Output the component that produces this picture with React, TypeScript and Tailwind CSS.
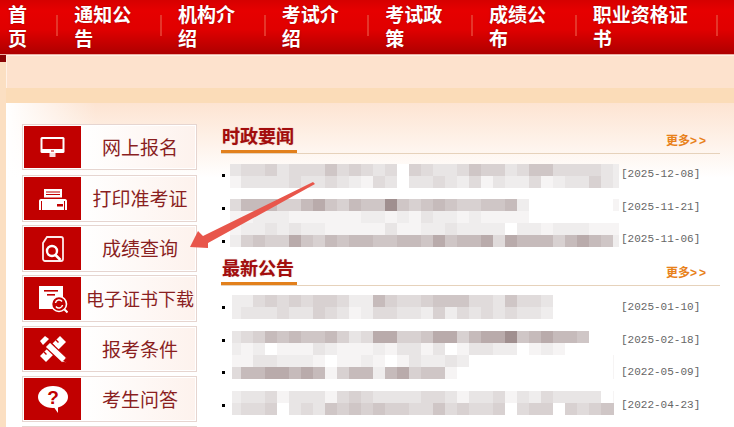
import type { ReactNode } from "react";

const cjk = "font-['Microsoft_YaHei','Noto_Sans_CJK_SC',sans-serif]";

const navItems = ["首页", "通知公告", "机构介绍", "考试介绍", "考试政策", "成绩公布", "职业资格证书"];

// mosaic shades, 0 = clean white up to 9 = darkest block
const shades = ["#ffffff", "#f6f4f4", "#efeded", "#e8e5e5", "#e0dbdb", "#d8d1d1", "#cfc6c6", "#c6bbbb", "#b9abab", "#a08f8f"];

const newsBlur = [
  { rows: ["344534446454340543346553466444432", "133334334321430334324132241233532"], gap: "mb-[11px]" },
  {
    rows: [
      "477755786576696567655667200000001",
      "112221111112212132212111100000000",
      "122323221111131122322220221222111",
      "256558657677667768677848777578762",
    ],
    gap: "",
  },
];

const noticeBlur = [
  { rows: ["224545455422754456664436443000000" + "1", "233343354312443325243434332000000" + "1"], gap: "mb-[12px]" },
  {
    rows: [
      "345767667534885568857889678776000" + "01",
      "212011132111213313013 322012100000".replace(" ", ""),
      "113322210112101322320000000000001",
      "477887871577278566100000000000001",
    ],
    gap: "mb-[12px]",
  },
  {
    rows: ["233413331454333344313341324333301", "344503436565655446454450455054566" + "21"],
    gap: "",
  },
];

function Mosaic({ rows, first, last, className }: { rows: string[]; first: number; last: number; className?: string }) {
  return (
    <div className={className}>
      {rows.map((row, i) => (
        <div key={i} className="flex h-[12px]">
          {row
            .slice(0, 33)
            .split("")
            .map((c, j) => (
              <div
                key={j}
                style={{
                  width: j === 0 ? first : j === 32 ? last : 12,
                  backgroundColor: shades[Number(c)],
                }}
              />
            ))}
        </div>
      ))}
    </div>
  );
}

function SectionHead({ title }: { title: string }) {
  return (
    <div className="flex h-[33px] justify-between border-b border-[#e6d2bb]">
      <h2
        className={`${cjk} h-[32px] w-[76px] border-b-[3px] border-[#e2801c] pl-px pt-[1px] text-[18px] font-bold leading-[26px] text-[#a30d0d] [text-shadow:0_0_1px_rgba(150,40,40,0.5)]`}
      >
        {title}
      </h2>
      <a className="pr-3 pt-[11px] text-[12px] font-bold leading-[16px] text-[#e8811a]">
        <span className={cjk}>更多</span>
        <span className="font-['Liberation_Sans',sans-serif] tracking-[2px]">&gt;&gt;</span>
      </a>
    </div>
  );
}

function Bullets({ count, className }: { count: number; className: string }) {
  return (
    <div className={className}>
      {Array.from({ length: count }).map((_, i) => (
        <div key={i} className="ml-px h-[3px] w-[3px] bg-black" />
      ))}
    </div>
  );
}

function Dates({ items, className }: { items: string[]; className: string }) {
  return (
    <div className={className}>
      {items.map((d) => (
        <div key={d} className="h-[20px] font-['Liberation_Mono',monospace] text-[11px] leading-[20px] text-[#666666]">
          [{d}]
        </div>
      ))}
    </div>
  );
}

const MonitorIcon = (
  <svg viewBox="0 0 30 30" className="h-[30px] w-[30px]" fill="none">
    <rect x="2.5" y="5" width="24" height="16" rx="1.5" fill="#fff" />
    <rect x="4.5" y="7" width="20" height="10" fill="#c10000" />
    <rect x="13" y="18.5" width="3" height="1" fill="#c10000" />
    <rect x="11.5" y="21" width="6" height="4" fill="#f5dcdc" />
  </svg>
);

const PrinterIcon = (
  <svg viewBox="0 0 30 30" className="h-[30px] w-[30px]" fill="none">
    <rect x="6" y="5" width="18" height="10" fill="#fff" />
    <rect x="8" y="7.5" width="14" height="1" fill="#c10000" />
    <rect x="8" y="10" width="14" height="1" fill="#c10000" />
    <path d="M1 26V17c0-1 .6-2 2-2h24c1.4 0 2 1 2 2v9H1Z" fill="#fff" />
    <rect x="3" y="13.5" width="24" height="1.5" fill="#c10000" />
    <rect x="3" y="17" width="1" height="9" fill="#c10000" />
    <rect x="26" y="17" width="1" height="9" fill="#c10000" />
    <rect x="19" y="20" width="6" height="2.5" fill="#c10000" />
  </svg>
);

const SearchDocIcon = (
  <svg viewBox="0 0 30 30" className="h-[30px] w-[30px]" fill="none" stroke="#fdeaea">
    <path d="M9 3h14c1 0 2 1 2 2v20c0 1-1 2-2 2H7c-1 0-2-1-2-2V9l4-6Z" strokeWidth="1.8" />
    <circle cx="14" cy="17" r="5" fill="#c10000" stroke="#fff" strokeWidth="2.4" />
    <path d="m17.5 21 5 5" stroke="#fff" strokeWidth="2.6" />
  </svg>
);

const CertIcon = (
  <svg viewBox="0 0 30 30" className="h-[30px] w-[30px]" fill="none">
    <rect x="1" y="2" width="24" height="23" fill="#fff" />
    <rect x="6" y="6" width="14" height="1.6" fill="#c10000" />
    <rect x="9" y="10" width="8" height="1.6" fill="#c10000" />
    <circle cx="21" cy="20" r="7.5" fill="#c10000" stroke="#fff" strokeWidth="1.6" />
    <path d="M17.5 19a3.6 3.6 0 0 1 6.5-1.5M24.5 21a3.6 3.6 0 0 1-6.5 1.5" stroke="#fff" strokeWidth="1.5" />
    <path d="m26.5 25.5 3 3" stroke="#fff" strokeWidth="2" />
  </svg>
);

const ToolsIcon = (
  <svg viewBox="0 0 30 30" className="h-[30px] w-[30px]" fill="none">
    <path d="M2 22 22 2l6 6L8 28Z" fill="#fff" />
    <path d="m6 18 2.5 2.5M10 14l2.5 2.5M14 10l2.500 2.500M18 6l2.500 2.500" stroke="#c10000" strokeWidth="1.400" />
    <path d="M2 7 7 2l4 3-6 6Z" fill="#fff" />
    <path d="M12 8 28 23l1 6-6-1L7 13Z" fill="#fff" stroke="#c10000" strokeWidth="1.200" />
    <path d="m25 27 3-3 1 5Z" fill="#c10000" />
  </svg>
);

const QuestionIcon = (
  <svg viewBox="0 0 30 30" className="h-[30px] w-[30px]">
    <ellipse cx="15" cy="13" rx="15" ry="11" fill="#fff" />
    <path d="M15 22 20 29 20 20Z" fill="#fff" />
    <text x="15" y="20" textAnchor="middle" fontSize="19" fontWeight="bold" fill="#c10000" fontFamily="Liberation Sans, sans-serif">
      ?
    </text>
  </svg>
);

const menu: { label: string; icon?: ReactNode; box: string; text: string }[] = [
  { label: "网上报名", icon: MonitorIcon, box: "h-[46px] mb-[5px]", text: "text-[19px]" },
  { label: "打印准考证", icon: PrinterIcon, box: "h-[47px] mb-[3px]", text: "text-[19px]" },
  { label: "成绩查询", icon: SearchDocIcon, box: "h-[47px] mb-[3px]", text: "text-[19px]" },
  { label: "电子证书下载", icon: CertIcon, box: "h-[47px] mb-[4px]", text: "text-[18px]" },
  { label: "报考条件", icon: ToolsIcon, box: "h-[46px] mb-[4px]", text: "text-[19px]" },
  { label: "考生问答", icon: QuestionIcon, box: "h-[46px] mb-[4px]", text: "text-[19px]" },
  { label: "", box: "h-[46px]", text: "text-[19px]" },
];

export default function App() {
  return (
    <div className="relative h-[427px] w-[734px] overflow-hidden bg-white">
      {/* top nav */}
      <div className="flex h-[55px] items-center bg-[linear-gradient(#d60000,#e60000_20%,#e00000_55%,#ae0000)] pb-[3px] pl-2 border-b border-[#ecaca0]">
        {navItems.map((item) => (
          <div key={item} className="flex items-center">
            <span
              className={`${cjk} text-[19px] font-bold leading-[24px] text-white [text-shadow:0_0_2px_rgba(130,0,0,0.7)]`}
            >
              {item}
            </span>
            <div className="ml-[11px] mr-[16px] h-[21px] w-[2px] bg-[#e5352a]" />
          </div>
        ))}
      </div>

      <div className="flex">
        {/* left strip */}
        <div className="h-[372px] w-[6px] bg-[#fbdfc2]">
          <div className="h-[7px] bg-[#8a0505]" />
        </div>

        <div className="flex-1">
          <div className="h-[33px] border-l border-t border-[#fff1e6] bg-[#fde2cd]" />
          <div className="h-[15px] bg-[#fbdcb8]" />

          <div className="flex bg-[linear-gradient(to_right,#ffffff,rgba(255,255,255,0)_90px),linear-gradient(#fde4d2,#ffffff_75px)] pl-4 pt-[21px]">
            {/* side menu */}
            <div className="w-[175px] shrink-0">
              {menu.map((m, i) => (
                <div key={i} className={`${m.box} flex border border-[#e6d5d0] bg-white p-px`}>
                  <div className="flex w-[57px] shrink-0 items-center justify-center bg-[#c10000]">{m.icon}</div>
                  <div
                    className={`${cjk} ${m.text} flex flex-1 items-center justify-center bg-[linear-gradient(to_right,#ffffff,#fdf2ed)] pl-[4px] text-[#8a1f1f] whitespace-nowrap`}
                  >
                    {m.label}
                  </div>
                </div>
              ))}
            </div>

            <div className="ml-6 w-[499px] -mt-[3px]">
              <SectionHead title="时政要闻" />
              <div className="flex h-[93px] pt-[10px]">
                <Bullets count={3} className="flex w-[9px] flex-col gap-[30px] pt-[10px]" />
                <div className="w-[391px]">
                  {newsBlur.map((b, i) => (
                    <Mosaic key={i} rows={b.rows} first={11} last={6} className={b.gap} />
                  ))}
                </div>
                <Dates items={["2025-12-08", "2025-11-21", "2025-11-06"]} className="flex flex-col gap-[12.5px]" />
              </div>

              <div className="mt-[6px]">
                <SectionHead title="最新公告" />
              </div>
              <div className="flex pt-[9px]">
                <Bullets count={4} className="flex w-[11px] flex-col gap-[29.5px] pt-[11px]" />
                <div className="w-[389px]">
                  {noticeBlur.map((b, i) => (
                    <Mosaic key={i} rows={b.rows} first={9} last={1} className={b.gap} />
                  ))}
                </div>
                <Dates items={["2025-01-10", "2025-02-18", "2022-05-09", "2022-04-23"]} className="flex flex-col gap-[12.5px] pt-[2px]" />
              </div>
            </div>
          </div>
        </div>
      </div>

      {/* red arrow drawn over the page */}
      <svg viewBox="0 0 128 69" className="absolute left-[188px] top-[181px] h-[69px] w-[128px]">
        <polygon points="125,1 127,3 20,62 20,67 2,66 10,50 15,55" fill="#e8564b" />
      </svg>
    </div>
  );
}
